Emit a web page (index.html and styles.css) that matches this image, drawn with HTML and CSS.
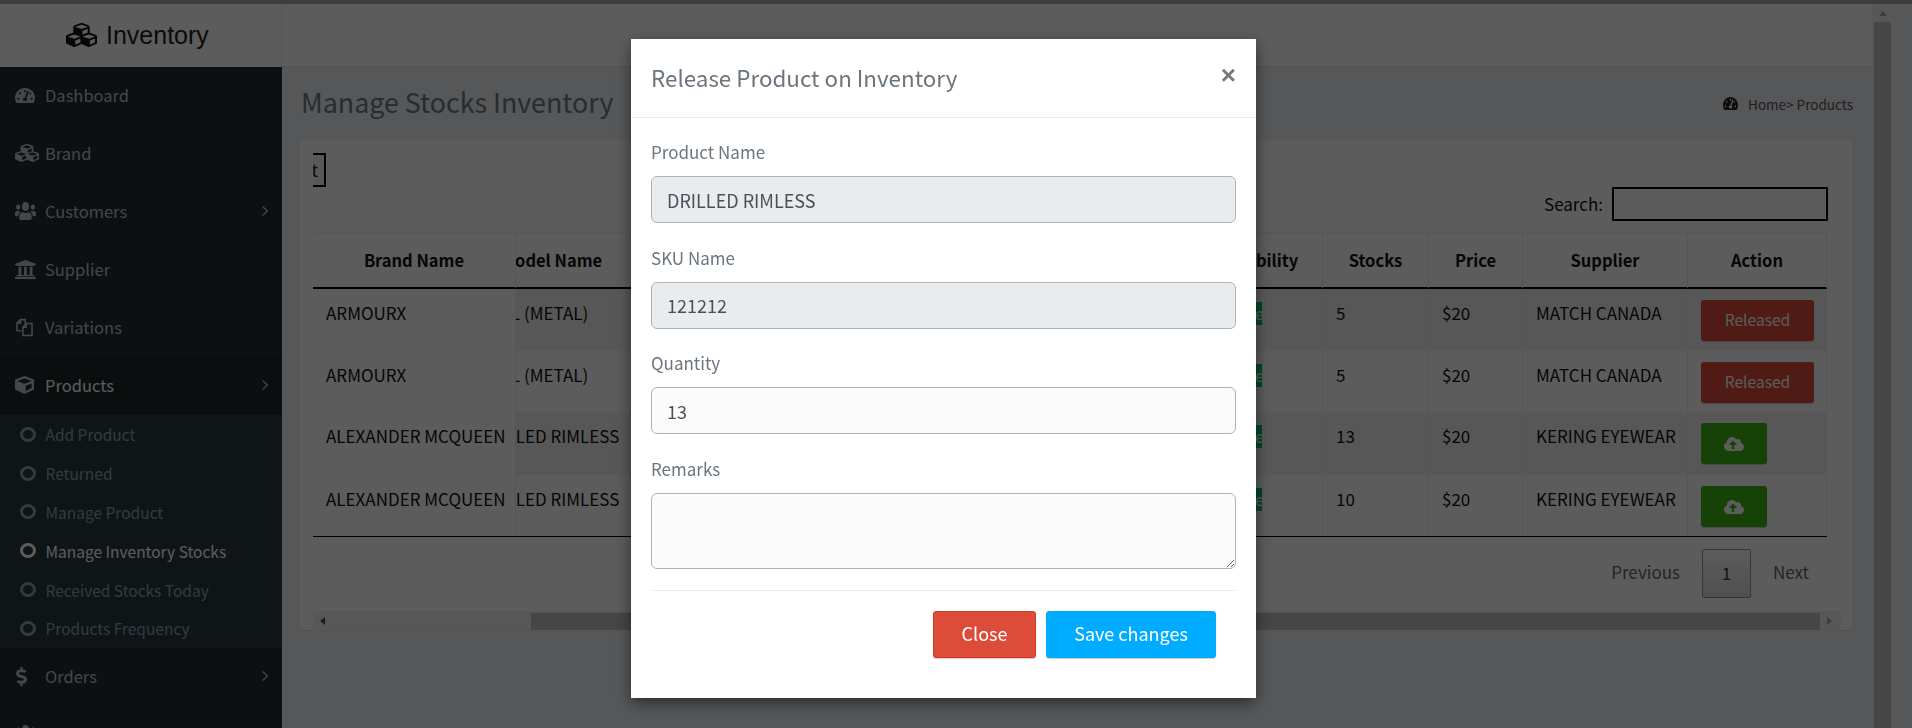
FILE: index.html
```html
<!DOCTYPE html>
<html lang="en">
<head>
    <meta charset="UTF-8">
    <meta name="viewport" content="width=device-width, initial-scale=1.0">
    <title>Manage Stocks Inventory</title>
    <link rel="stylesheet" href="styles.css">
</head>
<body>
    <!-- Icon sprites -->
    <svg class="sprites" xmlns="http://www.w3.org/2000/svg">
        <symbol id="i-gauge" viewBox="0 32 576 448" preserveAspectRatio="none"><path d="M288 32C128.94 32 0 160.94 0 320c0 52.8 14.25 102.26 39.06 144.8 5.61 9.62 16.3 15.2 27.44 15.2h443c11.14 0 21.83-5.58 27.44-15.2C561.75 422.26 576 372.8 576 320c0-159.06-128.94-288-288-288zm0 64c14.71 0 26.58 10.13 30.32 23.65-1.11 2.26-2.64 4.23-3.45 6.67l-9.22 27.67c-5.13 3.49-10.97 6.01-17.64 6.01-17.67 0-32-14.33-32-32S270.33 96 288 96zM96 384c-17.67 0-32-14.33-32-32s14.33-32 32-32 32 14.33 32 32-14.33 32-32 32zm48-160c-17.67 0-32-14.33-32-32s14.33-32 32-32 32 14.33 32 32-14.33 32-32 32zm246.77-72.41l-61.33 184C343.13 347.33 352 364.54 352 384c0 11.72-3.38 22.55-8.88 32H232.88c-5.5-9.45-8.88-20.28-8.88-32 0-33.94 26.5-61.43 59.9-63.59l61.34-184.01c4.17-12.56 17.73-19.45 30.36-15.17 12.57 4.19 19.35 17.79 15.17 30.36zm14.66 57.2l15.52-46.55c3.47-1.29 7.13-2.23 11.05-2.23 17.67 0 32 14.33 32 32s-14.33 32-32 32c-11.38-.01-20.89-6.28-26.57-15.22zM480 384c-17.67 0-32-14.33-32-32s14.33-32 32-32 32 14.33 32 32-14.33 32-32 32z"/></symbol>
        <symbol id="i-cubes" viewBox="0 32 512 448" preserveAspectRatio="none"><path d="M488.6 250.2L392 214V105.5c0-15-9.3-28.4-23.4-33.7l-100-37.5c-8.1-3.1-17.1-3.1-25.3 0l-100 37.5c-14.1 5.3-23.4 18.7-23.4 33.7V214l-96.6 36.2C9.3 255.5 0 268.9 0 283.9V394c0 13.6 7.7 26.1 19.9 32.2l100 50c10.1 5.1 22.1 5.1 32.2 0l103.9-52 103.9 52c10.1 5.1 22.1 5.1 32.2 0l100-50c12.2-6.1 19.9-18.6 19.9-32.2V283.9c0-15-9.3-28.4-23.4-33.7zM358 214.8l-85 31.9v-68.2l85-37v73.3zM154 104.1l102-38.2 102 38.2v.6l-102 41.4-102-41.4v-.6zm84 291.1l-85 42.5v-79.1l85-38.8v75.4zm0-112l-102 41.4-102-41.4v-.6l102-38.2 102 38.2v.6zm240 112l-85 42.5v-79.1l85-38.8v75.4zm0-112l-102 41.4-102-41.4v-.6l102-38.2 102 38.2v.6z"/></symbol>
        <symbol id="i-users" viewBox="0 32 640 448" preserveAspectRatio="none"><path d="M96 224c35.3 0 64-28.7 64-64s-28.7-64-64-64-64 28.7-64 64 28.7 64 64 64zm448 0c35.3 0 64-28.7 64-64s-28.7-64-64-64-64 28.7-64 64 28.7 64 64 64zm32 32h-64c-17.6 0-33.5 7.1-45.1 18.6 40.3 22.1 68.9 62 75.1 109.4h66c17.7 0 32-14.3 32-32v-32c0-35.3-28.7-64-64-64zm-256 0c61.9 0 112-50.1 112-112S381.9 32 320 32 208 82.1 208 144s50.1 112 112 112zm76.8 32h-8.3c-20.8 10-43.9 16-68.5 16s-47.6-6-68.5-16h-8.3C179.6 288 128 339.6 128 403.2V432c0 26.5 21.5 48 48 48h288c26.5 0 48-21.5 48-48v-28.8c0-63.6-51.6-115.2-115.2-115.2zm-223.7-13.4C161.5 263.1 145.6 256 128 256H64c-35.3 0-64 28.7-64 64v32c0 17.7 14.3 32 32 32h65.9c6.3-47.4 34.9-87.3 75.2-109.4z"/></symbol>
        <symbol id="i-bank" viewBox="16 32 480 448" preserveAspectRatio="none"><path d="M496 128v16a8 8 0 0 1-8 8h-24v12c0 6.627-5.373 12-12 12H60c-6.627 0-12-5.373-12-12v-12H24a8 8 0 0 1-8-8v-16a8 8 0 0 1 4.941-7.392l232-88a7.996 7.996 0 0 1 6.118 0l232 88A8 8 0 0 1 496 128zm-24 304H40c-13.255 0-24 10.745-24 24v16a8 8 0 0 0 8 8h464a8 8 0 0 0 8-8v-16c0-13.255-10.745-24-24-24zM96 192v192H60c-6.627 0-12 5.373-12 12v20h416v-20c0-6.627-5.373-12-12-12h-36V192h-64v192h-64V192h-64v192h-64V192H96z"/></symbol>
        <symbol id="i-clone" viewBox="0 0 24 24"><path d="M8 16H2.500V6.500L7 2h6v5M14 7h7.500v15H10V11.500z M7 2v4.500H2.500 M14 7v4.500h-4" fill="none" stroke="currentColor" stroke-width="2"/></symbol>
        <symbol id="i-cube" viewBox="0 0 512 512" preserveAspectRatio="none"><path d="M239.1 6.3l-208 78c-18.7 7-31.1 25-31.1 45v225.1c0 18.2 10.3 34.8 26.5 42.9l208 104c13.5 6.8 29.4 6.8 42.9 0l208-104c16.3-8.100 26.500-24.800 26.500-42.900V129.300c0-20-12.400-37.900-31.100-44.900l-208-78C262 2.200 250 2.200 239.100 6.300zM256 68.400l192 72v1.100l-192 78-192-78v-1.100l192-72zm32 356V275.500l160-65v133.900l-160 80z"/></symbol>
        <symbol id="i-dollar" viewBox="0 0 288 512" preserveAspectRatio="none"><path d="M209.2 233.4l-108-31.6C88.7 198.2 80 186.5 80 173.5c0-16.3 13.2-29.5 29.5-29.5h66.3c12.2 0 24.2 3.7 34.2 10.5 6.1 4.1 14.3 3.1 19.5-2l34.8-34c7.1-6.9 6.1-18.4-1.8-24.5C238 74.8 207.4 64.1 176 64V16c0-8.8-7.2-16-16-16h-32c-8.8 0-16 7.2-16 16v48h-2.5C45.8 64-5.400 118.700.500 183.600c4.200 46.100 39.400 83.600 83.800 96.600l102.500 30c12.500 3.700 21.200 15.300 21.200 28.300 0 16.300-13.200 29.500-29.500 29.500h-66.300C100 368 88 364.300 78 357.500c-6.100-4.100-14.300-3.100-19.500 2l-34.800 34c-7.100 6.900-6.100 18.400 1.800 24.500 24.500 19.200 55.100 29.900 86.500 30v48c0 8.800 7.200 16 16 16h32c8.800 0 16-7.200 16-16v-48.200c46.600-.900 90.300-28.600 105.700-72.700 21.500-61.600-14.600-124.800-72.500-141.700z"/></symbol>
        <symbol id="i-upload" viewBox="0 0 640 512"><path d="M537.600 226.600c4.100-10.700 6.400-22.400 6.400-34.600 0-53-43-96-96-96-19.700 0-38.100 6-53.300 16.200C367 64.200 315.300 32 256 32c-88.400 0-160 71.600-160 160 0 2.700.1 5.400.2 8.100C40.200 219.800 0 273.200 0 336c0 79.500 64.500 144 144 144h368c70.700 0 128-57.300 128-128 0-61.900-44-113.600-102.400-125.400zM393.400 288H328v112c0 8.800-7.200 16-16 16h-48c-8.800 0-16-7.200-16-16V288h-65.400c-14.300 0-21.400-17.200-11.300-27.300l105.400-105.400c6.200-6.200 16.400-6.200 22.600 0l105.400 105.400c10.100 10.100 2.900 27.300-11.300 27.300z"/></symbol>
        <symbol id="i-chevron" viewBox="0 0 10 16" preserveAspectRatio="none"><path d="M2 2l6 6-6 6" fill="none" stroke="currentColor" stroke-width="1.600"/></symbol>
    </svg>

    <div class="page">
        <div class="top-strip"></div>
        <div class="app">
            <!-- Sidebar -->
            <aside class="sidebar">
                <div class="logo">
                    <svg class="logo-icon"><use href="#i-cubes"/></svg>
                    <span>Inventory</span>
                </div>
                <nav class="menu">
                    <a class="menu-item"><span class="icon-cell"><svg class="ic-gauge"><use href="#i-gauge"/></svg></span>Dashboard</a>
                    <a class="menu-item"><span class="icon-cell"><svg class="ic-cubes"><use href="#i-cubes"/></svg></span>Brand</a>
                    <a class="menu-item"><span class="icon-cell"><svg class="ic-users"><use href="#i-users"/></svg></span>Customers<svg class="chevron"><use href="#i-chevron"/></svg></a>
                    <a class="menu-item"><span class="icon-cell"><svg class="ic-bank"><use href="#i-bank"/></svg></span>Supplier</a>
                    <a class="menu-item"><span class="icon-cell"><svg class="ic-clone"><use href="#i-clone"/></svg></span>Variations</a>
                    <a class="menu-item active"><span class="icon-cell"><svg class="ic-cube"><use href="#i-cube"/></svg></span>Products<svg class="chevron"><use href="#i-chevron"/></svg></a>
                    <div class="submenu">
                        <a class="sub-item"><i class="ring"></i>Add Product</a>
                        <a class="sub-item"><i class="ring"></i>Returned</a>
                        <a class="sub-item"><i class="ring"></i>Manage Product</a>
                        <a class="sub-item current"><i class="ring"></i>Manage Inventory Stocks</a>
                        <a class="sub-item"><i class="ring"></i>Received Stocks Today</a>
                        <a class="sub-item"><i class="ring"></i>Products Frequency</a>
                    </div>
                    <a class="menu-item"><span class="icon-cell"><svg class="ic-dollar"><use href="#i-dollar"/></svg></span>Orders<svg class="chevron"><use href="#i-chevron"/></svg></a>
                    <a class="menu-item"><span class="icon-cell"><svg class="ic-users"><use href="#i-users"/></svg></span></a>
                </nav>
            </aside>

            <!-- Main area -->
            <div class="main">
                <header class="navbar"></header>
                <section class="content">
                    <div class="title-row">
                        <h1>Manage Stocks Inventory</h1>
                        <div class="crumbs"><svg class="crumb-icon"><use href="#i-gauge"/></svg>Home&gt; Products</div>
                    </div>
                    <div class="card">
                        <div class="export-clip"><button class="export">Export</button></div>
                        <div class="search-row">
                            <label for="search">Search:</label>
                            <input type="text" id="search">
                        </div>
                        <table class="stocks">
                            <colgroup>
                                <col class="c-brand"><col class="c-model"><col class="c-avail"><col class="c-stocks"><col class="c-price"><col class="c-supplier"><col class="c-action">
                            </colgroup>
                            <thead>
                                <tr>
                                    <th class="fixed">Brand Name</th>
                                    <th class="shifted head">Model Name</th>
                                    <th>Availability</th>
                                    <th>Stocks</th>
                                    <th>Price</th>
                                    <th>Supplier</th>
                                    <th>Action</th>
                                </tr>
                            </thead>
                            <tbody>
                                <tr class="striped">
                                    <td class="fixed">ARMOURX</td>
                                    <td class="shifted metal">FULL (METAL)</td>
                                    <td><span class="badge">Available</span></td>
                                    <td>5</td><td>$20</td><td>MATCH CANADA</td>
                                    <td><button class="btn-released">Released</button></td>
                                </tr>
                                <tr>
                                    <td class="fixed">ARMOURX</td>
                                    <td class="shifted metal">FULL (METAL)</td>
                                    <td><span class="badge">Available</span></td>
                                    <td>5</td><td>$20</td><td>MATCH CANADA</td>
                                    <td><button class="btn-released">Released</button></td>
                                </tr>
                                <tr class="striped">
                                    <td class="fixed">ALEXANDER MCQUEEN</td>
                                    <td class="shifted">DRILLED RIMLESS</td>
                                    <td><span class="badge">Available</span></td>
                                    <td>13</td><td>$20</td><td>KERING EYEWEAR</td>
                                    <td><button class="btn-release"><svg class="upload"><use href="#i-upload"/></svg></button></td>
                                </tr>
                                <tr>
                                    <td class="fixed">ALEXANDER MCQUEEN</td>
                                    <td class="shifted">DRILLED RIMLESS</td>
                                    <td><span class="badge">Available</span></td>
                                    <td>10</td><td>$20</td><td>KERING EYEWEAR</td>
                                    <td><button class="btn-release"><svg class="upload"><use href="#i-upload"/></svg></button></td>
                                </tr>
                            </tbody>
                        </table>
                        <div class="pager">
                            <a>Previous</a>
                            <a class="page-current">1</a>
                            <a>Next</a>
                        </div>
                        <div class="hscroll">
                            <span class="arrow-left"></span>
                            <span class="hthumb"></span>
                            <span class="arrow-right"></span>
                        </div>
                    </div>
                </section>
            </div>

            <!-- Page scrollbar -->
            <div class="vscroll">
                <span class="arrow-up"></span>
                <span class="vthumb"></span>
            </div>
        </div>
    </div>

    <!-- Popup for releasing a product -->
    <div class="backdrop"></div>
    <div class="modal">
        <div class="modal-head">
            <h2>Release Product on Inventory</h2>
            <span class="modal-x">&times;</span>
        </div>
        <div class="modal-body">
            <label for="productName">Product Name</label>
            <input class="field" type="text" id="productName" value="DRILLED RIMLESS" disabled>
            <label for="skuName">SKU Name</label>
            <input class="field" type="text" id="skuName" value="121212" disabled>
            <label for="quantity">Quantity</label>
            <input class="field" type="text" id="quantity" value="13">
            <label for="remarks">Remarks</label>
            <textarea class="field" id="remarks"></textarea>
            <div class="modal-foot">
                <button class="btn-close">Close</button>
                <button class="btn-save">Save changes</button>
            </div>
        </div>
    </div>
</body>
</html>
```

FILE: styles.css
```css
html, body {
    margin: 0;
    height: 100%;
    overflow: hidden;
}

body {
    font-family: "Noto Sans CJK SC", "Source Sans Pro", sans-serif;
    font-size: 17px;
    line-height: 26px;
    color: #111;
    background-color: #ecf0f5;
}

.sprites {
    display: none;
}

.page {
    height: 728px;
    display: flex;
    flex-direction: column;
}

.top-strip {
    height: 4px;
    flex: none;
    background-color: #a8a8a8;
}

.app {
    flex: 1;
    display: flex;
    min-height: 0;
}

/* Sidebar */
.sidebar {
    width: 282px;
    flex: none;
    display: flex;
    flex-direction: column;
    background-color: #222d32;
}

.logo {
    height: 63px;
    box-sizing: border-box;
    flex: none;
    display: flex;
    align-items: center;
    padding: 0 0 2px 66px;
    gap: 9px;
    background-color: #fff;
    border-right: 1px solid #eee;
    font-family: "Liberation Sans", sans-serif;
    font-size: 25px;
    color: #222;
}

.logo-icon {
    width: 31px;
    height: 24px;
    fill: #111;
}

.menu {
    overflow: hidden;
}

.menu-item {
    height: 58px;
    box-sizing: border-box;
    display: flex;
    align-items: center;
    padding: 0 13px 2px 15px;
    font-size: 16.500px;
    color: #b8c7ce;
}

.menu-item.active {
    background-color: #1e282c;
    color: #fff;
}

.icon-cell {
    width: 30px;
    flex: none;
    display: flex;
    align-items: center;
    color: #b8c7ce;
    fill: currentColor;
}

.ic-gauge { width: 20px; height: 15px; }
.ic-cubes { width: 24px; height: 18px; }
.ic-users { width: 21px; height: 18px; }
.ic-bank { width: 21px; height: 19px; }
.ic-clone { width: 19px; height: 19px; }
.ic-cube { width: 19px; height: 18px; }
.ic-dollar { width: 11px; height: 19px; margin-left: 1px; }

.chevron {
    width: 8px;
    height: 12px;
    margin-left: auto;
    color: #b8c7ce;
}

.submenu {
    height: 233px;
    background-color: #2c3b41;
}

.sub-item {
    height: 38.800px;
    display: flex;
    align-items: center;
    padding-left: 20px;
    font-size: 15.500px;
    color: #8aa4af;
}

.sub-item.current {
    color: #fff;
}

.ring {
    width: 10px;
    height: 9px;
    margin-right: 9.500px;
    border: 3px solid currentColor;
    border-radius: 50%;
}

/* Main */
.main {
    width: 1590px;
    flex: none;
    display: flex;
    flex-direction: column;
}

.navbar {
    height: 63px;
    box-sizing: border-box;
    flex: none;
    background-color: #fff;
    border-bottom: 1px solid #e6e6e6;
}

.content {
    padding: 0 20px 0 18px;
}

.title-row {
    height: 73px;
    display: flex;
    align-items: center;
    justify-content: space-between;
}

.title-row h1 {
    margin: -3px 0 0 1px;
    font-size: 26.800px;
    line-height: 40px;
    font-weight: 400;
    color: #727a82;
}

.crumbs {
    display: flex;
    align-items: center;
    margin-right: -1px;
    font-size: 13.500px;
    color: #555;
}

.crumb-icon {
    width: 15px;
    height: 13px;
    margin-right: 10px;
    fill: #222;
}

.card {
    height: 490px;
    box-sizing: border-box;
    padding: 13px 11px 0 13px;
    background-color: #fff;
    border-radius: 4px;
    box-shadow: 0 1px 1px rgba(0, 0, 0, 0.1);
}

.export-clip {
    width: 13px;
    height: 34px;
    overflow: hidden;
    display: flex;
    justify-content: flex-end;
}

.export {
    flex: none;
    height: 34px;
    padding: 0 6px;
    font: inherit;
    line-height: 28px;
    background-color: #f3f3f3;
    border: 2px solid #000;
    border-radius: 0;
    color: #123;
}

.search-row {
    width: 1514px;
    height: 34px;
    margin-bottom: 11px;
    display: flex;
    align-items: center;
    justify-content: flex-end;
    gap: 9px;
}

.search-row input {
    width: 216px;
    height: 34px;
    box-sizing: border-box;
    margin-right: -1px;
    background: #fff;
    border: 2px solid #000;
}

/* Table */
.stocks {
    width: 1514px;
    table-layout: fixed;
    border-collapse: separate;
    border-spacing: 0;
    border-bottom: 1px solid #000;
}

.c-brand { width: 203px; }
.c-model { width: 667px; }
.c-avail { width: 140px; }
.c-stocks { width: 106px; }
.c-price { width: 94px; }
.c-supplier { width: 165px; }
.c-action { width: 139px; }

.stocks th {
    height: 54px;
    padding: 0 13px;
    font-size: 16.500px;
    font-weight: 700;
    text-align: center;
    white-space: nowrap;
    border-top: 1px solid #f0f0f0;
    border-right: 1px solid #eee;
    border-bottom: 2px solid #000;
}

.stocks td {
    height: 62px;
    box-sizing: border-box;
    padding: 11px 13px 0;
    vertical-align: top;
    border-right: 1px solid #eee;
    white-space: nowrap;
}

.stocks tbody tr:nth-child(even) td {
    height: 61px;
}

.stocks tbody tr:nth-child(3) td {
    height: 63px;
}

.stocks tr.striped td {
    background-color: #f2f2f2;
}

.stocks tr td.fixed {
    background-color: #fff;
    padding-right: 0;
}

.stocks td.shifted {
    padding: 11px 0 0;
    overflow: hidden;
    text-indent: -37px;
}

.stocks td.metal {
    text-indent: -36px;
}

.stocks th.shifted {
    padding: 0;
    overflow: hidden;
    text-align: left;
    text-indent: -15px;
}

.badge {
    display: block;
    width: 66px;
    height: 23px;
    margin-top: 2px;
    overflow: hidden;
    font-size: 16px;
    line-height: 23px;
    text-align: right;
    color: #fff;
    background-color: #0cc46c;
}

.btn-released,
.btn-release {
    height: 41px;
    display: flex;
    align-items: center;
    justify-content: center;
    padding: 0 0 3px;
    font: inherit;
    color: #fff;
    border: none;
    border-radius: 3px;
    box-shadow: 0 1px 1px rgba(0, 0, 0, 0.2);
}

.btn-released {
    width: 113px;
    font-size: 15.600px;
    background-color: #dd4b39;
}

.btn-release {
    width: 66px;
    padding: 0;
    background-color: #3fb618;
}

.upload {
    width: 20px;
    height: 16px;
    fill: #fff;
}

.pager {
    width: 1514px;
    height: 74px;
    box-sizing: border-box;
    padding: 12px 18px 0 0;
    display: flex;
    align-items: flex-start;
    justify-content: flex-end;
    gap: 22px;
    color: #666;
    line-height: 46px;
}

.page-current {
    width: 49px;
    height: 49px;
    box-sizing: border-box;
    text-align: center;
    line-height: 45px;
    color: #333;
    border: 1px solid #979797;
    border-radius: 2px;
    background: linear-gradient(#fff, #dcdcdc);
}

/* Scrollbars */
.hscroll {
    width: 1528px;
    height: 20px;
    display: flex;
    align-items: center;
    background-color: #f1f1f1;
}

.arrow-left {
    width: 0;
    height: 0;
    margin: 0 10px 0 7px;
    border: 4px solid transparent;
    border-left: 0;
    border-right: 5px solid #505050;
}

.hthumb {
    width: 1289px;
    height: 17px;
    margin-left: 196px;
    background-color: #c1c1c1;
}

.arrow-right {
    width: 0;
    height: 0;
    margin-left: 7px;
    border: 4px solid transparent;
    border-right: 0;
    border-left: 5px solid #a3a3a3;
}

.vscroll {
    width: 19px;
    flex: none;
    display: flex;
    flex-direction: column;
    align-items: flex-end;
    background-color: #f1f1f1;
}

.arrow-up {
    width: 0;
    height: 0;
    margin: 7px 4px 6px 0;
    border: 4px solid transparent;
    border-top: 0;
    border-bottom: 5px solid #a3a3a3;
}

.vthumb {
    width: 17px;
    flex: 1;
    background-color: #c1c1c1;
}

/* Popup */
.backdrop {
    position: fixed;
    inset: 0;
    background-color: rgba(0, 0, 0, 0.64);
}

.modal {
    position: fixed;
    top: 39px;
    left: 631px;
    width: 625px;
    height: 659px;
    background-color: #fff;
    box-shadow: 0 5px 15px rgba(0, 0, 0, 0.5);
}

.modal-head {
    height: 79px;
    box-sizing: border-box;
    padding: 0 20px 3px;
    display: flex;
    align-items: center;
    justify-content: space-between;
    border-bottom: 1px solid #eee;
}

.modal-head h2 {
    margin: 0;
    font-size: 22.400px;
    line-height: 36px;
    font-weight: 400;
    color: #6c757d;
}

.modal-x {
    margin: -4px 0 0 0;
    font-family: "Liberation Sans", sans-serif;
    font-size: 26px;
    font-weight: 700;
    color: #777;
}

.modal-body {
    padding: 21px 20px 0;
}

.modal-body label {
    display: block;
    height: 26px;
    margin-bottom: 11px;
    color: #6c757d;
}

.field {
    display: block;
    width: 100%;
    height: 47px;
    box-sizing: border-box;
    margin-bottom: 21.500px;
    padding: 0 15px;
    font: inherit;
    font-size: 18px;
    color: #495057;
    background-color: #fbfbfb;
    border: 1px solid #b2b2b2;
    border-radius: 6px;
}

.field:disabled {
    background-color: #e9ecef;
}

textarea.field {
    height: 76px;
    margin-bottom: 21px;
}

.modal-foot {
    padding: 20px 20px 0 0;
    display: flex;
    justify-content: flex-end;
    gap: 10px;
    border-top: 1px solid #eee;
}

.modal-foot button {
    height: 47px;
    padding: 0 0 3px;
    font: inherit;
    font-size: 18px;
    color: #fff;
    border-radius: 3px;
    box-shadow: 0 1px 1px rgba(0, 0, 0, 0.2);
}

.btn-close {
    width: 103px;
    background-color: #dd4b39;
    border: 1px solid #d73925;
}

.btn-save {
    width: 170px;
    background-color: #00acff;
    border: 1px solid #00acff;
}
```
